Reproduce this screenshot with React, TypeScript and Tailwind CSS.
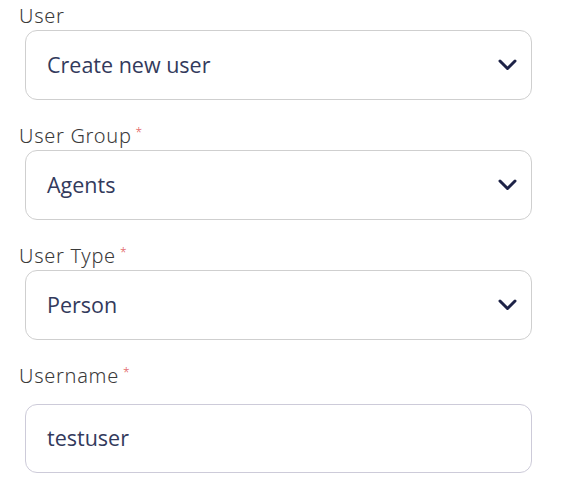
import { ReactNode } from "react"

function Chevron() {
  return (
    <svg width="19" height="12" viewBox="0 0 19 12" fill="none" className="shrink-0">
      <path d="M2 2l7.5 7.5L17 2" stroke="#1e2347" strokeWidth="3" strokeLinecap="round" strokeLinejoin="round" />
    </svg>
  )
}

function Label({ children, required }: { children: ReactNode; required?: boolean }) {
  return (
    <div className="ml-[19px] h-[25px] pt-[7px] text-[20px] leading-[18px] font-light tracking-[0.7px] text-[#3a3a3a] font-['Noto_Sans',sans-serif]">
      {children}
      {required && <span className="ml-[4px] relative top-[-6px] text-[12px] text-[#e05656]">*</span>}
    </div>
  )
}

function SelectField({ label, value, required }: { label: string; value: string; required?: boolean }) {
  return (
    <div className="mb-[20px]">
      <Label required={required}>{label}</Label>
      <div className="ml-[25px] mt-[5px] flex h-[70px] w-[507px] items-center justify-between rounded-[12px] border border-[#cfcfcf] bg-white pl-[21px] pr-[14px]">
        <span className="text-[21.5px] text-[#333a5c] font-['Open_Sans',sans-serif]">{value}</span>
        <Chevron />
      </div>
    </div>
  )
}

export default function App() {
  return (
    <div className="min-h-[500px] w-[565px] bg-white">
      <SelectField label="User" value="Create new user" />
      <SelectField label="User Group" value="Agents" required />
      <SelectField label="User Type" value="Person" required />
      <div>
        <Label required>Username</Label>
        <div className="ml-[25px] mt-[19px] flex h-[69px] w-[507px] items-center rounded-[12px] border border-[#cdcbd9] bg-white pl-[21px]">
          <span className="text-[21.5px] text-[#333a5c] font-['Open_Sans',sans-serif]">testuser</span>
        </div>
      </div>
    </div>
  )
}
